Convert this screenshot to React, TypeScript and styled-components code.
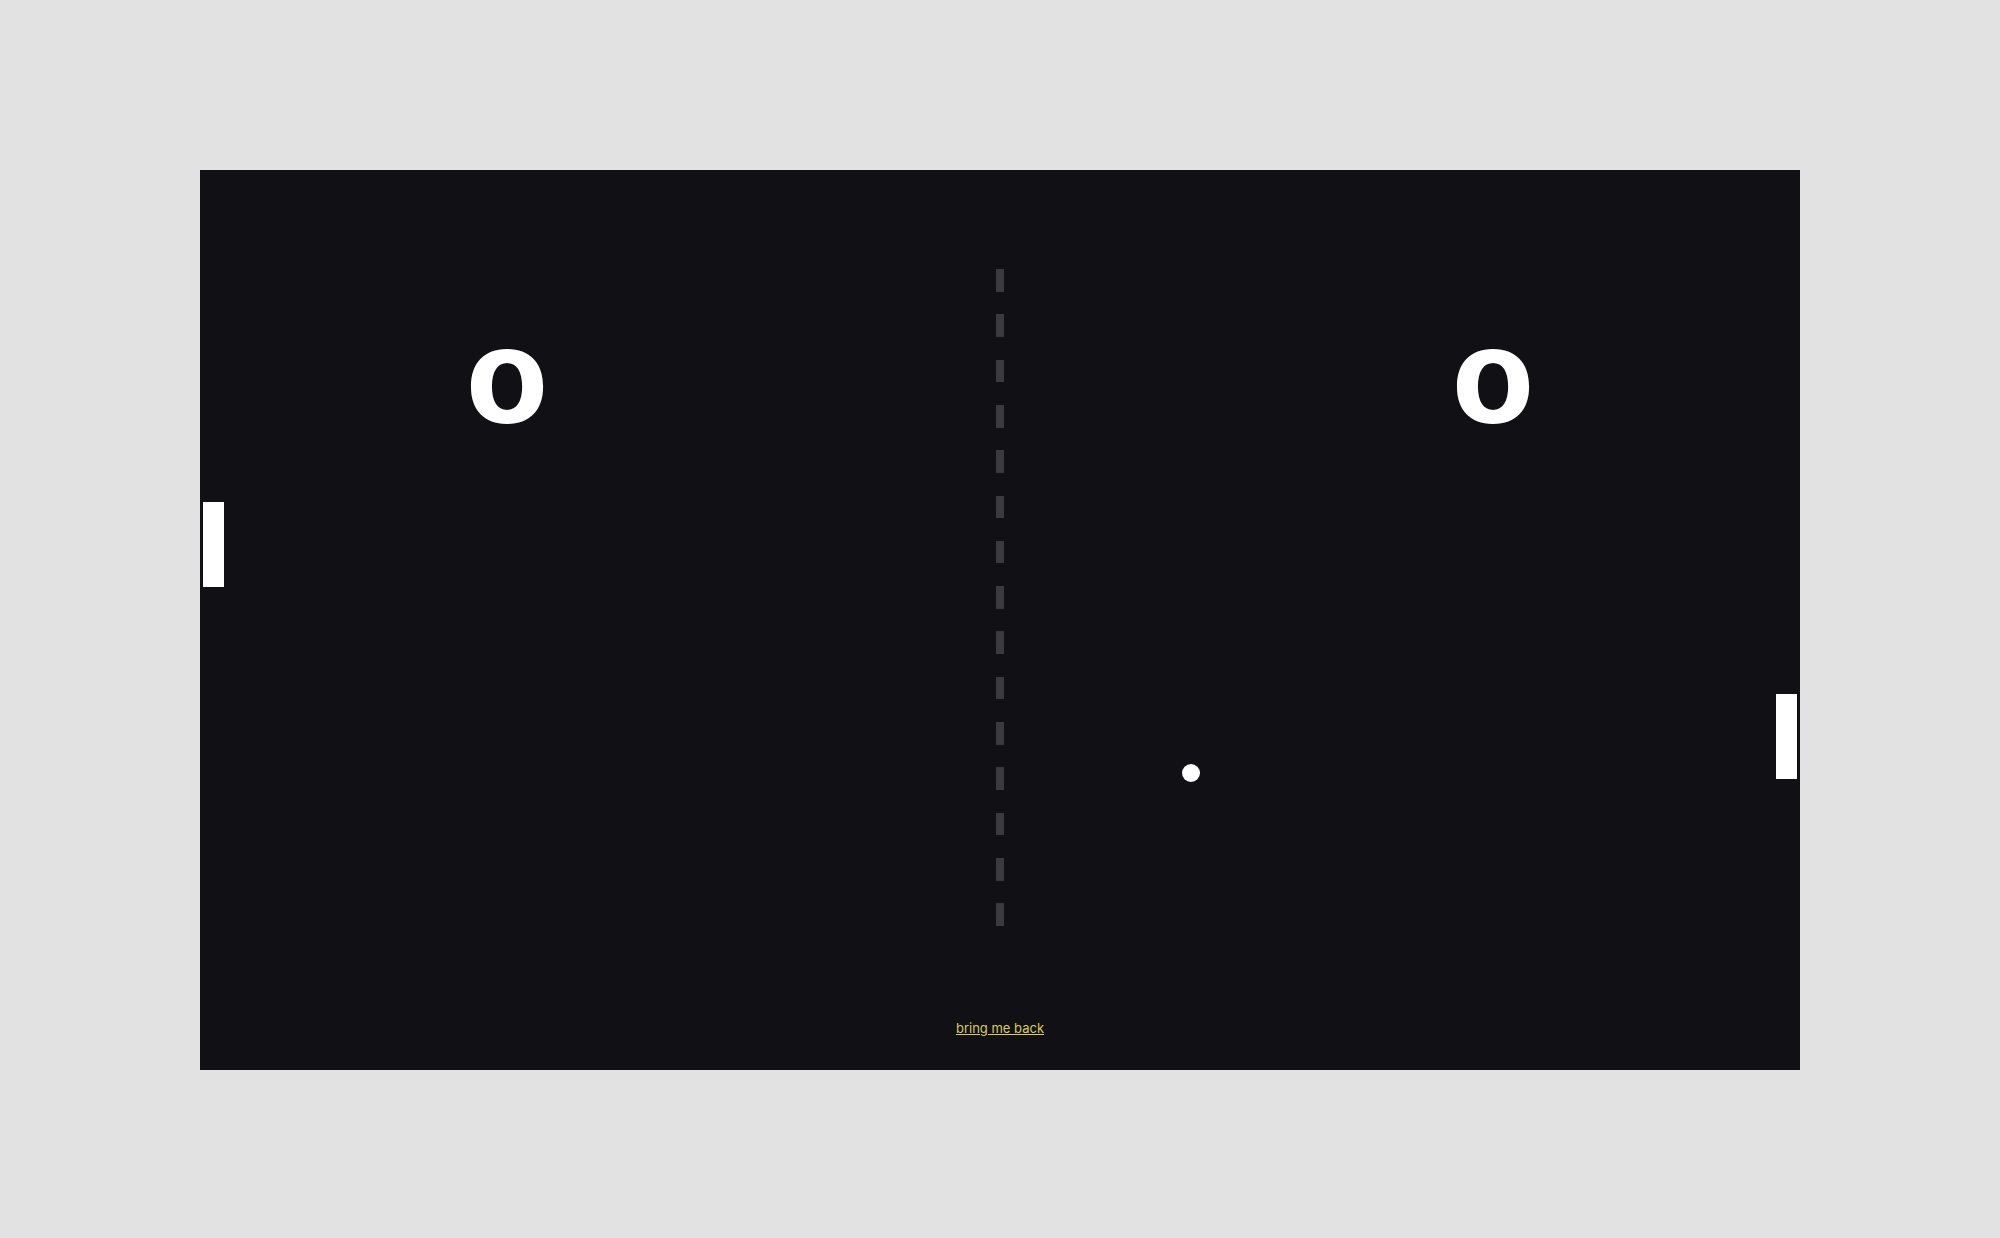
import React from "react";
import styled, { createGlobalStyle } from "styled-components";

const GlobalStyle = createGlobalStyle`
  html, body {
    margin: 0;
    padding: 0;
    background: #e2e2e2;
  }
  #root {
    min-height: 1238px;
  }
`;

const Page = styled.div`
  width: 2000px;
  height: 1238px;
  display: flex;
  align-items: center;
  justify-content: center;
  background: #e2e2e2;
`;

const Board = styled.div`
  position: relative;
  width: 1600px;
  height: 900px;
  margin-top: 1px;
  background: #111115;
  display: flex;
  flex-direction: column;
  overflow: hidden;
`;

const ScoreRow = styled.div`
  display: flex;
  justify-content: space-between;
  padding: 167px 207px 0;
`;

const Score = styled.div`
  width: 200px;
  text-align: center;
  color: #ffffff;
  font-family: Inter, "Liberation Sans", sans-serif;
  font-weight: 800;
  font-size: 100px;
  line-height: 1;
  transform: scaleX(1.18);
`;

const Net = styled.div`
  position: absolute;
  left: 796px;
  top: 99px;
  width: 8px;
  height: 657px;
  background: repeating-linear-gradient(
    to bottom,
    #3a3a3e 0px,
    #3a3a3e 22.65px,
    transparent 22.65px,
    transparent 45.3px
  );
`;

const Paddle = styled.div<{ $side: "left" | "right"; $top: number }>`
  position: absolute;
  top: ${(p) => p.$top}px;
  ${(p) => (p.$side === "left" ? "left: 3px;" : "right: 3px;")}
  width: 21px;
  height: 85px;
  background: #ffffff;
`;

const Ball = styled.div`
  position: absolute;
  left: 982px;
  top: 594px;
  width: 18px;
  height: 18px;
  border-radius: 50%;
  background: #ffffff;
`;

const Footer = styled.div`
  margin-top: auto;
  padding-bottom: 34px;
  display: flex;
  justify-content: center;
`;

const BackLink = styled.a`
  font-family: Inter, "Liberation Sans", sans-serif;
  font-size: 13px;
  line-height: 16px;
  color: #dacd5c;
  text-decoration: underline;
  cursor: pointer;
`;

export default function App() {
  return (
    <>
      <GlobalStyle />
      <Page>
        <Board>
          <Net />
          <ScoreRow>
            <Score>0</Score>
            <Score>0</Score>
          </ScoreRow>
          <Paddle $side="left" $top={332} />
          <Paddle $side="right" $top={524} />
          <Ball />
          <Footer>
            <BackLink href="#">bring me back</BackLink>
          </Footer>
        </Board>
      </Page>
    </>
  );
}
